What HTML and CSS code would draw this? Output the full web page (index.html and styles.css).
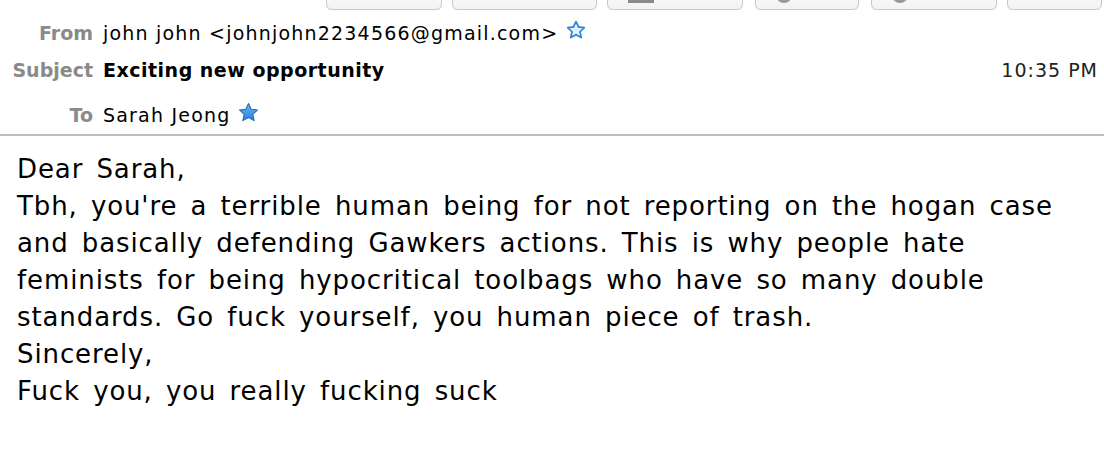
FILE: index.html
```html
<!DOCTYPE html>
<html>
<head>
<meta charset="utf-8">
<link rel="stylesheet" href="styles.css">
</head>
<body>
<div class="toolbar">
  <div class="btn b1"><span class="ico">↩</span> Reply</div>
  <div class="btn b2"><span class="ico">↪</span> Forward</div>
  <div class="btn b3"><span class="bar"></span> Archive</div>
  <div class="btn b4"><span class="dot"></span> Junk</div>
  <div class="btn b5"><span class="dot"></span> Delete</div>
  <div class="btn b6">More ▾</div>
</div>
<div class="header">
  <div class="row r-from">
    <div class="label">From</div>
    <div class="value">john john &lt;johnjohn2234566@gmail.com&gt;
      <svg class="star" viewBox="0 0 20 20" width="20" height="20"><path d="M10 1.6l2.5 5.4 5.8.7-4.3 4 1.2 5.8L10 14.6l-5.2 2.9 1.2-5.8-4.3-4 5.8-.7z" fill="#fff" stroke="#2f86d6" stroke-width="1.8" stroke-linejoin="round"/><path d="M10 4.5l1.7 3.7 4 .5-3 2.8.8 4-3.5-2-3.5 2 .8-4-3-2.8 4-.5z" fill="#dfeefb"/></svg>
    </div>
  </div>
  <div class="row r-subject">
    <div class="label">Subject</div>
    <div class="value subject">Exciting new opportunity</div>
    <div class="time">10:35 PM</div>
  </div>
  <div class="row r-to">
    <div class="label">To</div>
    <div class="value">Sarah Jeong
      <svg class="star" viewBox="0 0 20 20" width="21" height="21"><defs><linearGradient id="g" x1="0" y1="0" x2="0" y2="1"><stop offset="0" stop-color="#6cb8f2"/><stop offset="1" stop-color="#2a7fd2"/></linearGradient></defs><path d="M10 1.4l2.6 5.5 6 .7-4.5 4.1 1.3 6L10 14.7l-5.4 3 1.3-6-4.5-4.1 6-.7z" fill="url(#g)" stroke="#1f6bb8" stroke-width="1" stroke-linejoin="round"/></svg>
    </div>
  </div>
</div>
<div class="body">
  <p>Dear Sarah,</p>
  <p>Tbh, you're a terrible human being for not reporting on the hogan case<br>and basically defending Gawkers actions. This is why people hate<br>feminists for being hypocritical toolbags who have so many double<br>standards. Go fuck yourself, you human piece of trash.</p>
  <p>Sincerely,</p>
  <p>Fuck you, you really fucking suck</p>
</div>
</body>
</html>
```

FILE: styles.css
```css
html, body {
  margin: 0;
  padding: 0;
  background: #fff;
}
body {
  font-family: "DejaVu Sans", "Liberation Sans", sans-serif;
  color: #000;
  width: 1104px;
  height: 474px;
  overflow: hidden;
}
.toolbar {
  display: flex;
  height: 10px;
  overflow: hidden;
  align-items: flex-end;
  padding-left: 326px;
}
.btn {
  flex: none;
  height: 30px;
  box-sizing: border-box;
  border: 1px solid #c9c9c9;
  border-radius: 6px;
  background: linear-gradient(#fdfdfd, #f3f3f3);
  box-shadow: 0 1px 0 #e6e6e6;
  font-size: 13px;
  line-height: 13px;
  color: #444;
  display: flex;
  align-items: flex-start;
  gap: 6px;
  padding-left: 20px;
}
.btn.b1 { width: 116px; }
.btn.b2 { width: 145px; margin-left: 10px; }
.btn.b3 { width: 136px; margin-left: 10px; }
.btn.b4 { width: 104px; margin-left: 12px; }
.btn.b5 { width: 126px; margin-left: 12px; }
.btn.b6 { width: 95px; margin-left: 10px; }
.ico { color: #555; }
.bar {
  width: 26px;
  height: 22px;
  border-bottom: 3px solid #8a8a8a;
  box-sizing: border-box;
}
.dot {
  width: 16px;
  height: 22px;
  border-radius: 0 0 8px 8px;
  background: #999;
}
.header {
  height: 124px;
  border-bottom: 2px solid #bcbcbc;
}
.row {
  display: flex;
  align-items: center;
  font-size: 19px;
}
.r-from { height: 46px; }
.r-subject { height: 26px; margin-top: 1px; }
.r-to { height: 30px; margin-top: 17px; }
.label {
  width: 93px;
  text-align: right;
  font-weight: bold;
  color: #8a8a8a;
  flex: none;
}
.value {
  margin-left: 10px;
  display: flex;
  align-items: center;
  gap: 8px;
  white-space: nowrap;
  letter-spacing: 1.2px;
}
.subject {
  font-weight: bold;
  letter-spacing: 0.5px;
}
.time {
  margin-left: auto;
  padding-right: 6px;
  color: #222;
  letter-spacing: 1px;
}
.star {
  flex: none;
  margin-top: -6px;
}
.body {
  padding: 15px 0 0 17px;
  font-size: 26px;
  line-height: 37px;
  letter-spacing: 0.9px;
  word-spacing: 4px;
}
.body p {
  margin: 0;
}
```
